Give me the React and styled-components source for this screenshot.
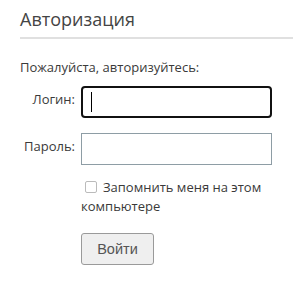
import React from "react";
import styled, { createGlobalStyle } from "styled-components";

const Global = createGlobalStyle`
  html, body { margin: 0; padding: 0; background: #fff; }
  body { font-family: "Open Sans", "DejaVu Sans", sans-serif; color: #333; }
`;

const Page = styled.div`
  padding: 6px 0 0 20px;
`;

const Title = styled.h2`
  margin: 0;
  font-size: 18px;
  font-weight: 400;
  line-height: 26px;
  color: #444;
  padding-bottom: 5px;
  border-bottom: 2px solid #e0e0e0;
`;

const Intro = styled.p`
  margin: 19px 0 0 0;
  font-size: 13px;
  line-height: 18px;
  color: #3a3a3a;
`;

const Form = styled.div`
  display: grid;
  grid-template-columns: 55px 191px;
  column-gap: 6px;
  row-gap: 15px;
  margin-top: 10px;
`;

const Label = styled.label`
  text-align: right;
  font-size: 13px;
  line-height: 18px;
  padding-top: 4px;
  color: #3a3a3a;
`;

const FieldWrap = styled.div`
  position: relative;
  height: 32px;
`;

const Input = styled.input`
  box-sizing: border-box;
  width: 191px;
  height: 32px;
  margin: 0;
  padding: 0 8px;
  font: inherit;
  outline: none;
  background: #fff;
  border: ${(p) => (p.$focused ? "2px solid #111" : "1px solid #8e9da5")};
  border-radius: ${(p) => (p.$focused ? "4px" : "0")};
`;

const Caret = styled.span`
  position: absolute;
  left: 10px;
  top: 6px;
  width: 1px;
  height: 20px;
  background: #000;
`;

const Remember = styled.div`
  grid-column: 2;
  font-size: 13px;
  line-height: 19px;
  color: #3a3a3a;
  margin-top: -2px;
`;

const Check = styled.span`
  display: inline-block;
  box-sizing: border-box;
  width: 12px;
  height: 12px;
  border: 1px solid #bbb;
  border-radius: 2px;
  margin: 0 6px 0 4px;
  vertical-align: -1px;
  background: #fff;
`;

const Button = styled.button`
  grid-column: 2;
  justify-self: start;
  box-sizing: border-box;
  width: 73px;
  height: 32px;
  margin-top: 2px;
  background: #efefef;
  border: 1px solid #9a9a9a;
  border-radius: 3px;
  font-family: "Liberation Sans", Arial, sans-serif;
  font-size: 14.5px;
  color: #555;
  padding: 0;
`;

export default function App() {
  return (
    <Page>
      <Global />
      <Title>Авторизация</Title>
      <Intro>Пожалуйста, авторизуйтесь:</Intro>
      <Form>
        <Label>Логин:</Label>
        <FieldWrap>
          <Input $focused type="text" />
          <Caret />
        </FieldWrap>
        <Label>Пароль:</Label>
        <FieldWrap>
          <Input type="password" />
        </FieldWrap>
        <Remember>
          <Check />
          Запомнить меня на этом компьютере
        </Remember>
        <Button>Войти</Button>
      </Form>
    </Page>
  );
}
